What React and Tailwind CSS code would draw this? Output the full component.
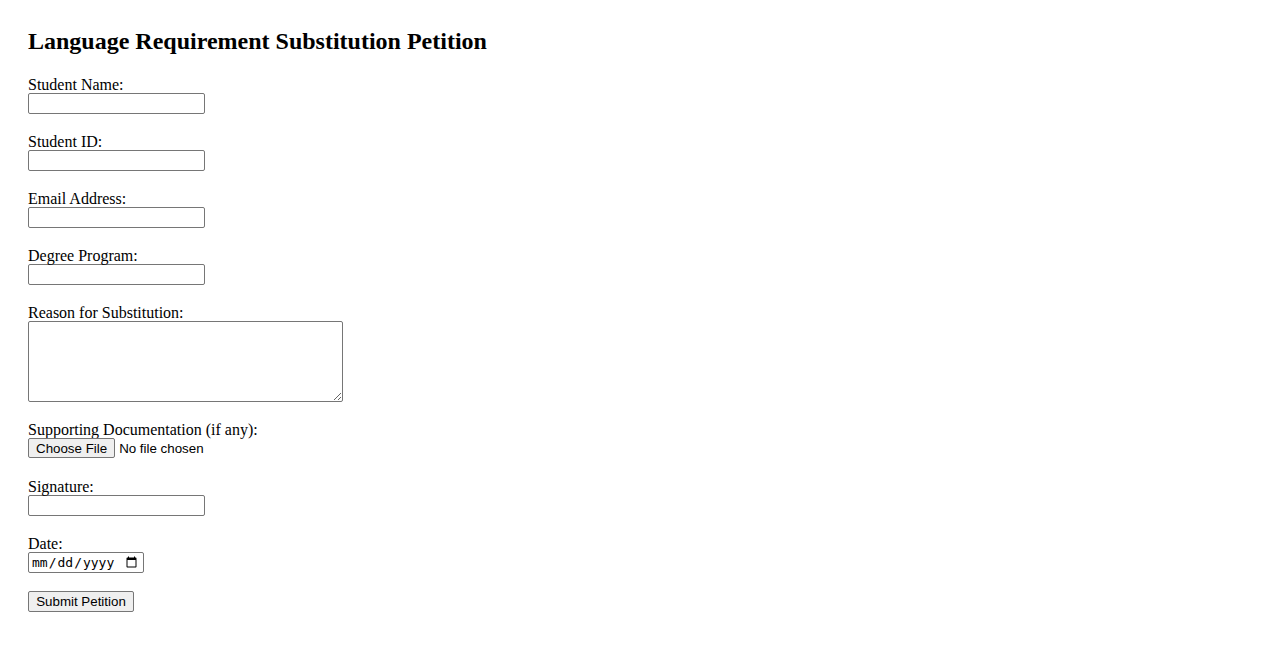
import { useState } from "react"

const textFields = [
  { id: "name", label: "Student Name:" },
  { id: "studentId", label: "Student ID:" },
  { id: "email", label: "Email Address:", type: "email" },
  { id: "program", label: "Degree Program:" },
]

const inputCls =
  "block -mt-[1px] w-[177px] h-[21px] px-[2px] border border-[#767676] rounded-[2px] bg-white text-[13.33px] font-['Liberation_Sans',Arial,sans-serif]"

function Field({ id, label, children }) {
  return (
    <div className="mb-[17px]">
      <label htmlFor={id} className="block pt-[2px] leading-[18px]">
        {label}
      </label>
      {children}
    </div>
  )
}

export default function App() {
  const [form, setForm] = useState({})

  const update = (key) => (e) => setForm({ ...form, [key]: e.target.value })

  return (
    <div className="min-h-screen bg-white text-black pt-[27px] pl-[28px] font-['Liberation_Serif','Times_New_Roman',serif] text-[16px]">
      <h2 className="text-[24px] font-bold leading-[28px] mb-[19px]">Language Requirement Substitution Petition</h2>

      <form onSubmit={(e) => e.preventDefault()}>
        {textFields.map((f) => (
          <Field key={f.id} id={f.id} label={f.label}>
            <input id={f.id} type={f.type || "text"} value={form[f.id] || ""} onChange={update(f.id)} className={inputCls} />
          </Field>
        ))}

        <Field id="reason" label="Reason for Substitution:">
          <textarea
            id="reason"
            value={form.reason || ""}
            onChange={update("reason")}
            className="block -mt-[1px] w-[315px] h-[81px] p-[2px] border border-[#767676] rounded-[2px] resize text-[13.33px] font-['Liberation_Mono',monospace]"
          />
        </Field>

        <Field id="docs" label="Supporting Documentation (if any):">
          <input
            id="docs"
            type="file"
            className="block -mt-[1px] w-[260px] h-[21px] text-[13.33px] leading-[20px] font-['Liberation_Sans',Arial,sans-serif] file:h-[20px] file:px-[7px] file:mr-[4px] file:border file:border-[#767676] file:rounded-[2px] file:bg-[#efefef] file:text-black"
          />
        </Field>

        <Field id="signature" label="Signature:">
          <input id="signature" type="text" value={form.signature || ""} onChange={update("signature")} className={inputCls} />
        </Field>

        <div className="mb-[18px]">
          <label htmlFor="date" className="block pt-[2px] leading-[18px]">
            Date:
          </label>
          <input
            id="date"
            type="date"
            value={form.date || ""}
            onChange={update("date")}
            className="block -mt-[1px] w-[116px] h-[21px] pl-[2px] pr-[3px] border border-[#767676] rounded-[2px] text-[13px] font-['DejaVu_Sans_Mono',monospace]"
          />
        </div>

        <button
          type="submit"
          className="block w-[106px] h-[21px] border border-[#767676] rounded-[2px] bg-[#efefef] text-[13.33px] leading-[19px] font-['Liberation_Sans',Arial,sans-serif]"
        >
          Submit Petition
        </button>
      </form>
    </div>
  )
}
